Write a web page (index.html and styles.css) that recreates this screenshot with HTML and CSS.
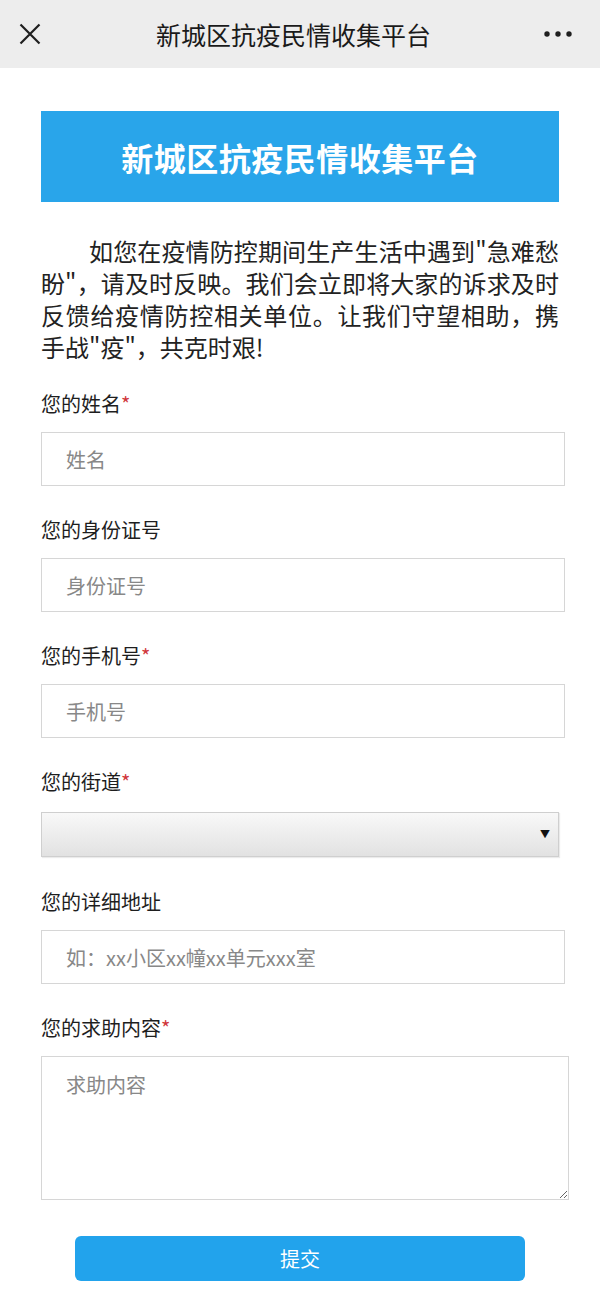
FILE: index.html
```html
<!DOCTYPE html>
<html lang="zh-CN">
<head>
    <meta charset="UTF-8">
    <meta name="viewport" content="width=device-width, initial-scale=1.0">
    <title>新城区抗疫民情收集平台</title>
    <link rel="stylesheet" href="styles.css">
</head>
<body>
    <div class="topbar">
        <svg class="close-icon" width="22" height="22" viewBox="0 0 22 22">
            <path d="M1.5 1.5 L20.5 20.5 M20.5 1.5 L1.5 20.5" stroke="#1f1f1f" stroke-width="2.2" fill="none"/>
        </svg>
        <div class="topbar-title">新城区抗疫民情收集平台</div>
        <svg class="more-icon" width="28" height="6" viewBox="0 0 28 6">
            <circle cx="3" cy="3" r="2.7" fill="#1f1f1f"/>
            <circle cx="14" cy="3" r="2.7" fill="#1f1f1f"/>
            <circle cx="25" cy="3" r="2.7" fill="#1f1f1f"/>
        </svg>
    </div>

    <div class="page">
        <div class="banner">新城区抗疫民情收集平台</div>

        <p class="intro">如您在疫情防控期间生产生活中遇到"急难愁盼"，请及时反映。我们会立即将大家的诉求及时反馈给疫情防控相关单位。让我们守望相助，携手战"疫"，共克时艰!</p>

        <form id="helpForm">
            <div class="field first">
                <label for="name">您的姓名<span class="req">*</span></label>
                <input type="text" id="name" class="text-input" placeholder="姓名">
            </div>

            <div class="field">
                <label for="idcard">您的身份证号</label>
                <input type="text" id="idcard" class="text-input" placeholder="身份证号">
            </div>

            <div class="field">
                <label for="phone">您的手机号<span class="req">*</span></label>
                <input type="text" id="phone" class="text-input" placeholder="手机号">
            </div>

            <div class="field street">
                <label for="street">您的街道<span class="req">*</span></label>
                <div class="select-wrap">
                    <select id="street" class="select-input">
                        <option value=""></option>
                    </select>
                    <span class="select-arrow">▼</span>
                </div>
            </div>

            <div class="field after-select">
                <label for="address">您的详细地址</label>
                <input type="text" id="address" class="text-input" placeholder="如：xx小区xx幢xx单元xxx室">
            </div>

            <div class="field">
                <label for="content">您的求助内容<span class="req">*</span></label>
                <textarea id="content" class="text-area" placeholder="求助内容"></textarea>
            </div>

            <button type="submit" class="submit-btn">提交</button>
        </form>
    </div>
</body>
</html>
```

FILE: styles.css
```css
body {
    margin: 0;
    padding: 0;
    background: #fff;
    font-family: "Noto Sans CJK SC", "Noto Sans", sans-serif;
    color: #222;
}

.topbar {
    height: 68px;
    background-color: #ededed;
    display: flex;
    align-items: center;
    padding: 0 28px 0 19px;
}

.close-icon {
    flex: none;
}

.topbar-title {
    flex: 1;
    text-align: center;
    font-size: 25px;
    color: #1a1a1a;
    padding-left: 2px;
}

.more-icon {
    flex: none;
}

.page {
    padding: 43px 0 40px 41px;
}

.banner {
    width: 518px;
    height: 91px;
    background-color: #29a5ea;
    color: #fff;
    font-size: 32px;
    font-weight: bold;
    letter-spacing: 0.5px;
    display: flex;
    align-items: center;
    justify-content: center;
}

.intro {
    width: 518px;
    margin: 33px 0 0 0;
    font-size: 24px;
    line-height: 32px;
    text-indent: 2em;
    text-align: justify;
    color: #222;
}

form {
    display: flex;
    flex-direction: column;
    align-items: flex-start;
}

.field {
    margin-top: 30px;
}

.field.first {
    margin-top: 27px;
}

.field.street label {
    margin-bottom: 16px;
}

.field.after-select {
    margin-top: 31px;
}

label {
    display: block;
    font-size: 20px;
    line-height: 28px;
    margin-bottom: 14px;
    color: #1e1e1e;
}

.req {
    color: #d0363a;
}

.text-input {
    display: block;
    box-sizing: border-box;
    width: 524px;
    height: 54px;
    margin: 0;
    padding: 0 24px;
    border: 1px solid #d6d6d6;
    border-radius: 0;
    font-family: inherit;
    font-size: 20px;
    color: #222;
    outline: none;
}

.text-input::placeholder,
.text-area::placeholder {
    color: #888;
}

.select-wrap {
    position: relative;
    width: 518px;
}

.select-input {
    display: block;
    box-sizing: border-box;
    width: 518px;
    height: 45px;
    margin: 0;
    border: 1px solid #cfcfcf;
    border-radius: 0;
    background: linear-gradient(#f8f8f8, #e2e2e2);
    box-shadow: 1px 1px 1px rgba(0, 0, 0, 0.08);
    -webkit-appearance: none;
    appearance: none;
    font-family: inherit;
    font-size: 20px;
}

.select-arrow {
    position: absolute;
    right: 9px;
    top: 14px;
    font-size: 10px;
    line-height: 16px;
    color: #111;
    pointer-events: none;
}

.text-area {
    display: block;
    box-sizing: border-box;
    width: 528px;
    height: 144px;
    margin: 0;
    padding: 14px 24px;
    border: 1px solid #d6d6d6;
    border-radius: 0;
    font-family: inherit;
    font-size: 20px;
    line-height: 28px;
    color: #222;
    resize: vertical;
    outline: none;
}

.submit-btn {
    width: 450px;
    height: 45px;
    margin: 36px 0 0 34px;
    border: none;
    border-radius: 6px;
    background-color: #22a3ec;
    color: #fff;
    font-family: inherit;
    font-size: 20px;
    cursor: pointer;
}
```
